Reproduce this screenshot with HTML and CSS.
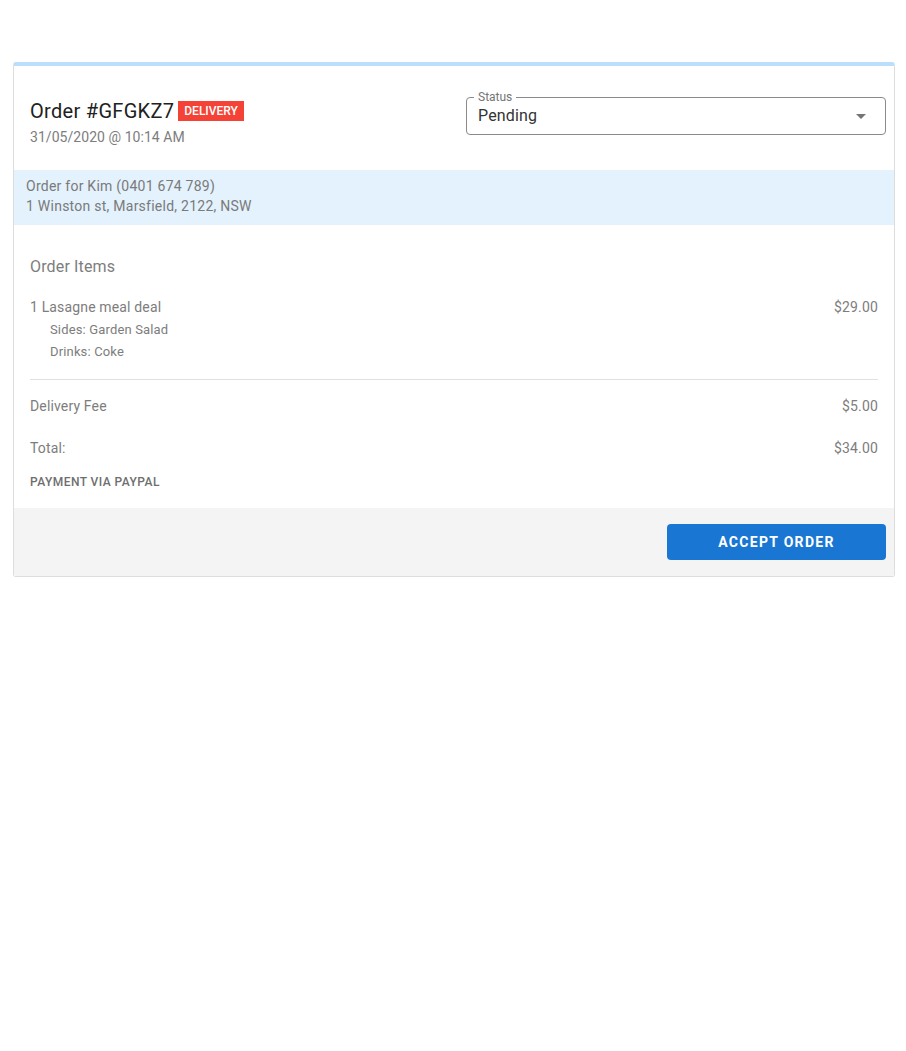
FILE: index.html
```html
<!DOCTYPE html>
<html>
<head>
<meta charset="utf-8">
<link rel="stylesheet" href="styles.css">
</head>
<body>
<div class="page">
  <div class="card">
    <div class="header">
      <div class="title-col">
        <div class="title-row">
          <span class="title">Order #GFGKZ7</span>
          <span class="badge">DELIVERY</span>
        </div>
        <div class="date">31/05/2020 @ 10:14 AM</div>
      </div>
      <div class="select">
        <span class="select-label">Status</span>
        <span class="select-value">Pending</span>
        <svg class="arrow" width="10" height="5" viewBox="0 0 10 5"><path d="M0 0 L10 0 L5 5 Z" fill="#757575"/></svg>
      </div>
    </div>
    <div class="customer">
      <div>Order for Kim (0401 674 789)</div>
      <div>1 Winston st, Marsfield, 2122, NSW</div>
    </div>
    <div class="items">
      <div class="section-title">Order Items</div>
      <div class="row item">
        <span>1 Lasagne meal deal</span>
        <span>$29.00</span>
      </div>
      <div class="options">
        <div class="option">Sides: Garden Salad</div>
        <div class="option">Drinks: Coke</div>
      </div>
      <div class="divider"></div>
      <div class="row fee">
        <span>Delivery Fee</span>
        <span>$5.00</span>
      </div>
      <div class="row total">
        <span>Total:</span>
        <span>$34.00</span>
      </div>
      <div class="payment">PAYMENT VIA PAYPAL</div>
    </div>
    <div class="footer">
      <button class="accept">ACCEPT ORDER</button>
    </div>
  </div>
</div>
</body>
</html>
```

FILE: styles.css
```css
* { box-sizing: border-box; }
body {
  margin: 0;
  font-family: Roboto, "Liberation Sans", sans-serif;
  background: #fff;
  color: #757575;
}
.page {
  padding: 62px 11px 0 13px;
}
.card {
  border: 1px solid #dddddd;
  border-top: 4px solid #bbdefb;
  border-radius: 3px;
  background: #fff;
}
.header {
  display: flex;
  justify-content: space-between;
  align-items: flex-start;
  padding: 31px 8px 23px 16px;
}
.title-row {
  display: flex;
  align-items: center;
  height: 28px;
}
.title {
  font-size: 20px;
  color: #212121;
  line-height: 28px;
  letter-spacing: 0.3px;
}
.badge {
  margin-left: 4px;
  background: #f44336;
  color: #fff;
  font-size: 12px;
  font-weight: 500;
  height: 20px;
  line-height: 20px;
  padding: 0 6px;
}
.date {
  font-size: 14px;
  line-height: 20px;
  margin-top: 2px;
  color: #7d7d7d;
  letter-spacing: 0.05px;
}
.select {
  position: relative;
  width: 420px;
  height: 38px;
  border: 1px solid #8a8a8a;
  border-radius: 4px;
  display: flex;
  align-items: center;
  padding: 0 19px 0 11px;
  justify-content: space-between;
}
.select-label {
  position: absolute;
  top: -9px;
  left: 7px;
  padding: 0 4px;
  background: #fff;
  font-size: 12px;
  line-height: 16px;
  color: #757575;
}
.select-value {
  font-size: 16px;
  line-height: 20px;
  margin-top: -1px;
  color: #333;
  letter-spacing: 0.15px;
}
.customer {
  background: #e3f2fd;
  padding: 6px 12px 9px;
  font-size: 14px;
  line-height: 20px;
  color: #7a7a7a;
  letter-spacing: 0.25px;
}
.items {
  padding: 30px 16px 18px 16px;
  letter-spacing: 0.15px;
}
.section-title {
  font-size: 16px;
  line-height: 24px;
  color: #7d7d7d;
}
.row {
  display: flex;
  justify-content: space-between;
  font-size: 14px;
  line-height: 20px;
  color: #7d7d7d;
}
.item { margin-top: 18px; }
.options { margin-top: 2px; }
.option {
  font-size: 13px;
  line-height: 22px;
  padding-left: 20px;
  color: #7d7d7d;
}
.divider {
  height: 1px;
  background: #e0e0e0;
  margin-top: 16px;
}
.fee { margin-top: 16px; }
.total { margin-top: 22px; }
.payment {
  margin-top: 16px;
  font-size: 12px;
  line-height: 16px;
  font-weight: 500;
  color: #6e6e6e;
  letter-spacing: 0.45px;
}
.footer {
  background: #f4f4f4;
  padding: 16px 8px 16px 16px;
  display: flex;
  justify-content: flex-end;
}
.accept {
  width: 219px;
  height: 36px;
  border: none;
  border-radius: 4px;
  background: #1976d2;
  color: #fff;
  font-family: Roboto, "Liberation Sans", sans-serif;
  font-size: 14px;
  font-weight: 700;
  letter-spacing: 1.3px;
}
```
